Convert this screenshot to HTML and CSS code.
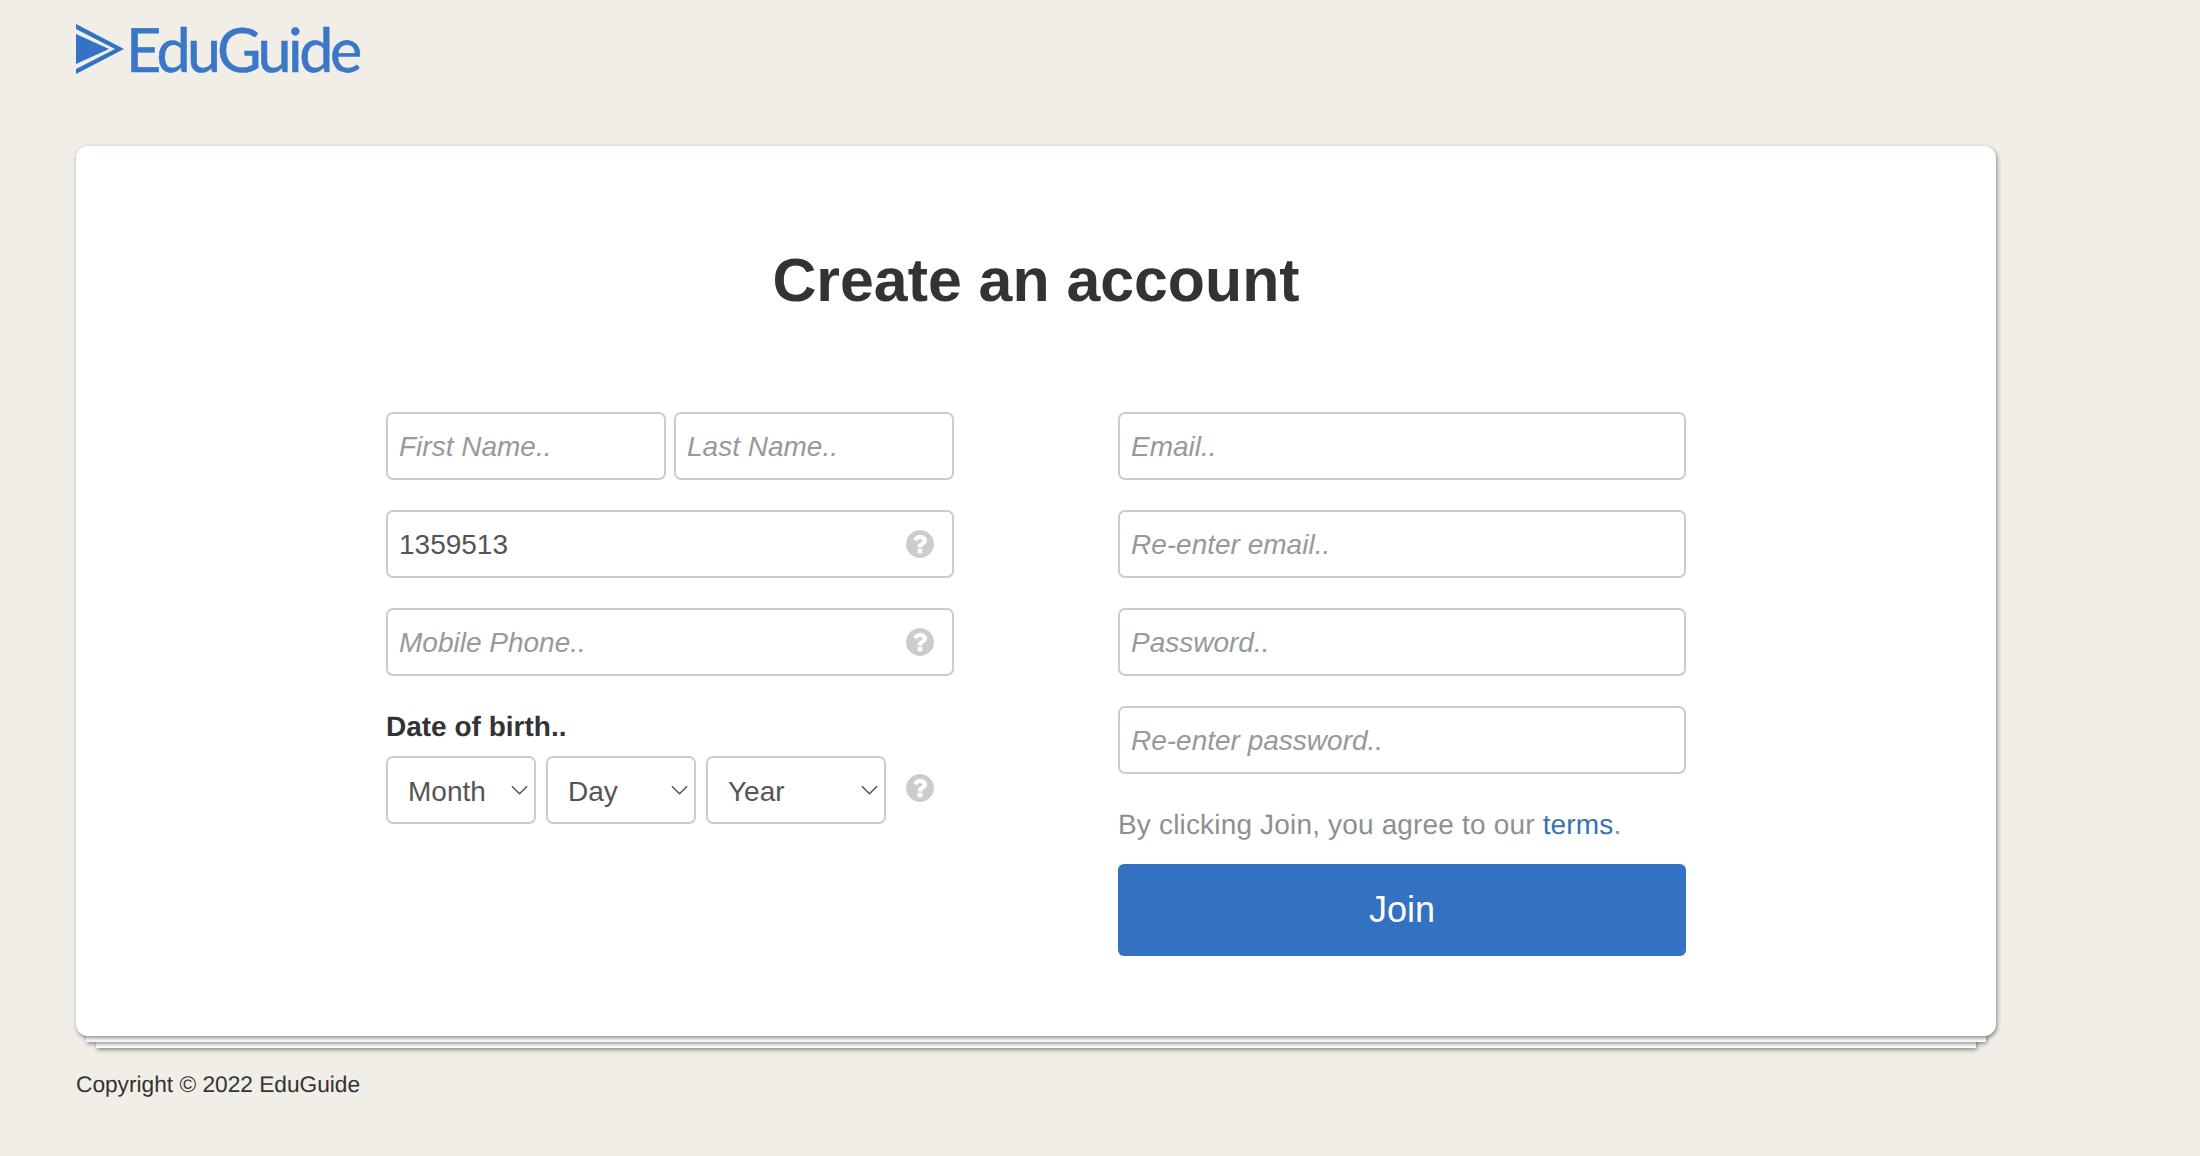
FILE: index.html
```html
<!DOCTYPE html>
<html lang="en">
<head>
    <meta charset="UTF-8">
    <meta name="viewport" content="width=device-width, initial-scale=1.0">
    <title>Create an account - EduGuide</title>
    <link rel="stylesheet" href="styles.css">
</head>
<body>

    <!-- Logo -->
    <header class="site-header">
        <a class="logo" href="#">
            <svg class="logo-mark" viewBox="0 0 48 50">
                <polygon points="0,0 48,25 0,50 0,45 39,25 0,5"></polygon>
                <polygon points="0,10 33,25 0,40"></polygon>
            </svg>
            <span class="logo-text">EduGuide</span>
        </a>
    </header>

    <main class="card">
        <h1>Create an account</h1>

        <form class="signup-form">
            <!-- Left column -->
            <div class="form-col">
                <div class="form-row name-row">
                    <input type="text" placeholder="First Name..">
                    <input type="text" placeholder="Last Name..">
                </div>
                <div class="form-row has-help">
                    <input type="text" value="1359513">
                    <svg class="help-icon"><use href="#question-circle"></use></svg>
                </div>
                <div class="form-row has-help">
                    <input type="text" placeholder="Mobile Phone..">
                    <svg class="help-icon"><use href="#question-circle"></use></svg>
                </div>
                <label class="dob-label">Date of birth..</label>
                <div class="dob-row">
                    <div class="select-wrap month">
                        <select><option>Month</option></select>
                        <svg class="chevron" viewBox="0 0 18 10"><path d="M1 1l8 8 8-8"></path></svg>
                    </div>
                    <div class="select-wrap day">
                        <select><option>Day</option></select>
                        <svg class="chevron" viewBox="0 0 18 10"><path d="M1 1l8 8 8-8"></path></svg>
                    </div>
                    <div class="select-wrap year">
                        <select><option>Year</option></select>
                        <svg class="chevron" viewBox="0 0 18 10"><path d="M1 1l8 8 8-8"></path></svg>
                    </div>
                    <svg class="dob-help"><use href="#question-circle"></use></svg>
                </div>
            </div>

            <!-- Right column -->
            <div class="form-col">
                <div class="form-row"><input type="text" placeholder="Email.."></div>
                <div class="form-row"><input type="text" placeholder="Re-enter email.."></div>
                <div class="form-row"><input type="password" placeholder="Password.."></div>
                <div class="form-row"><input type="password" placeholder="Re-enter password.."></div>
                <p class="terms">By clicking Join, you agree to our <a href="#">terms</a>.</p>
                <button class="btn-join" type="button">Join</button>
            </div>
        </form>
    </main>

    <footer class="site-footer">Copyright &copy; 2022 EduGuide</footer>

    <svg class="icon-defs" width="0" height="0">
        <symbol id="question-circle" viewBox="128 128 1536 1536">
            <path d="M1024 1376v-192q0-14-9-23t-23-9h-192q-14 0-23 9t-9 23v192q0 14 9 23t23 9h192q14 0 23-9t9-23zm256-672q0-88-55.5-163t-138.5-116-170-41q-243 0-371 213-15 24 8 42l132 100q7 6 19 6 16 0 25-12 53-68 86-92 34-24 86-24 48 0 85.5 26t37.5 59q0 38-20 61t-68 45q-63 28-115.5 86.5t-52.5 125.5v36q0 14 9 23t23 9h192q14 0 23-9t9-23q0-19 21.5-49.5t54.5-49.5q32-18 49-28.5t46-35 44.5-48 28-60.5 12.5-81zm384 192q0 209-103 385.5t-279.5 279.5-385.5 103-385.5-103-279.5-279.5-103-385.5 103-385.5 279.5-279.5 385.5-103 385.5 103 279.5 279.5 103 385.5z"></path>
        </symbol>
    </svg>

</body>
</html>
```

FILE: styles.css
```css
/* Reset default margins and paddings */
* {
    margin: 0;
    padding: 0;
    box-sizing: border-box;
}

body {
    font-family: 'Liberation Sans', Arial, sans-serif;
    background-color: #f1eee7;
    padding: 0 204px 0 76px;
    color: #333;
    text-rendering: geometricPrecision;
}

/* Header */
.site-header {
    height: 146px;
    padding-top: 24px;
}

.logo {
    display: flex;
    align-items: flex-start;
    gap: 2px;
    text-decoration: none;
}

.logo-mark {
    width: 48px;
    height: 50px;
    fill: #3372c4;
}

.logo-text {
    font-family: 'Lato', sans-serif;
    font-size: 61px;
    line-height: 50px;
    letter-spacing: -3.5px;
    color: #3a77c6;
    -webkit-text-stroke: 0.6px #3a77c6;
}

/* Card with the two sheets under it */
.card {
    position: relative;
    height: 890px;
    padding-top: 90px;
    background-color: #fff;
    border-radius: 12px;
    box-shadow: 1px 2px 4px rgba(0, 0, 0, 0.45);
}

.card::before,
.card::after {
    content: "";
    position: absolute;
    background-color: #fff;
    box-shadow: 1px 2px 4px rgba(0, 0, 0, 0.4);
}

.card::before {
    left: 10px;
    right: 10px;
    top: 10px;
    bottom: -6px;
    z-index: -1;
}

.card::after {
    left: 20px;
    right: 20px;
    top: 20px;
    bottom: -12px;
    z-index: -2;
}

h1 {
    font-size: 60.8px;
    line-height: 88px;
    text-align: center;
    color: #333;
    margin-bottom: 88px;
}

/* Form */
.signup-form {
    display: flex;
    justify-content: center;
    gap: 164px;
}

.form-col {
    width: 568px;
}

.form-row {
    margin-bottom: 30px;
}

.name-row {
    display: flex;
    gap: 8px;
}

.has-help {
    position: relative;
}

input[type="text"], input[type="password"], select {
    display: block;
    width: 100%;
    height: 68px;
    border: 2px solid #ccc;
    border-radius: 7px;
    background-color: #fff;
    font-family: inherit;
    font-size: 28px;
    color: #555;
    outline: none;
}

input[type="text"], input[type="password"] {
    padding: 2px 12px 0 11px;
}

input::placeholder {
    color: #999;
    font-style: italic;
    opacity: 1;
}

.help-icon {
    position: absolute;
    top: 20px;
    right: 20px;
    width: 28px;
    height: 28px;
    fill: #ccc;
}

/* Date of birth */
.dob-label {
    display: block;
    padding-top: 1px;
    margin-bottom: 9px;
    font-size: 28px;
    font-weight: bold;
    line-height: 40px;
}

.dob-row {
    display: flex;
    gap: 10px;
}

.select-wrap {
    position: relative;
    width: 150px;
}

.select-wrap.year {
    width: 180px;
}

select {
    appearance: none;
    padding: 2px 30px 0 20px;
}

.chevron {
    position: absolute;
    top: 29px;
    right: 8px;
    width: 17px;
    height: 10px;
    fill: none;
    stroke: #555;
    stroke-width: 1.6;
}

.dob-help {
    width: 28px;
    height: 28px;
    margin-left: auto;
    margin-right: 20px;
    margin-top: 18px;
    fill: #ccc;
}

/* Terms and button */
.terms {
    font-size: 28px;
    line-height: 40px;
    letter-spacing: 0.17px;
    color: #8f8f8f;
    margin-bottom: 20px;
    padding-top: 1px;
    height: 40px;
}

.terms a {
    color: #3a72b4;
    text-decoration: none;
}

.btn-join {
    display: block;
    width: 100%;
    height: 92px;
    border: none;
    border-radius: 6px;
    background-color: #3371c3;
    color: #fff;
    font-family: inherit;
    font-size: 36px;
    cursor: pointer;
}

/* Footer */
.site-footer {
    margin-top: 33px;
    font-size: 22.7px;
    line-height: 30px;
    color: #333;
}

.icon-defs {
    position: absolute;
}
```
